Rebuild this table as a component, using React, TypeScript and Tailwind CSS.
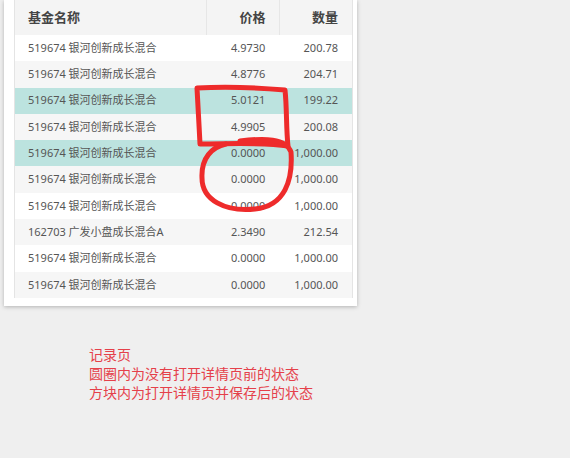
import React from "react";

const rows: { name: string; price: string; qty: string; hl?: boolean }[] = [
  { name: "519674 银河创新成长混合", price: "4.9730", qty: "200.78" },
  { name: "519674 银河创新成长混合", price: "4.8776", qty: "204.71" },
  { name: "519674 银河创新成长混合", price: "5.0121", qty: "199.22", hl: true },
  { name: "519674 银河创新成长混合", price: "4.9905", qty: "200.08" },
  { name: "519674 银河创新成长混合", price: "0.0000", qty: "1,000.00", hl: true },
  { name: "519674 银河创新成长混合", price: "0.0000", qty: "1,000.00" },
  { name: "519674 银河创新成长混合", price: "0.0000", qty: "1,000.00" },
  { name: "162703 广发小盘成长混合A", price: "2.3490", qty: "212.54" },
  { name: "519674 银河创新成长混合", price: "0.0000", qty: "1,000.00" },
  { name: "519674 银河创新成长混合", price: "0.0000", qty: "1,000.00" },
];

export default function App() {
  return (
    <div
      className="relative w-[570px] h-[458px] bg-[#efefef] overflow-hidden"
      style={{ fontFamily: '"Noto Sans", "Noto Sans CJK SC", sans-serif' }}
    >
      <div className="ml-[4px] w-[353px] bg-white shadow-[0_1px_4px_rgba(0,0,0,0.25)] pl-[10px] pr-[4px] pb-[8px]">
        <div className="w-[339px] border-l border-r border-[#e4e4e4]">
          <div className="flex h-[35px] bg-[#f4f4f4] text-[13px] font-bold text-[#444] items-center">
            <div className="w-[192px] pl-[13px] h-full flex items-center">基金名称</div>
            <div className="w-[74px] h-full flex items-center justify-end pr-[14px] border-l border-[#e6e6e6]">价格</div>
            <div className="w-[73px] h-full flex items-center justify-end pr-[14px] border-l border-[#e6e6e6]">数量</div>
          </div>
          {rows.map((r, i) => (
            <div
              key={i}
              className={
                "flex h-[26.3px] items-center text-[11px] text-[#555] " +
                (r.hl ? "bg-[#bce3df]" : i % 2 === 1 ? "bg-[#f6f6f6]" : "bg-white")
              }
            >
              <div className="w-[192px] pl-[13px]">{r.name}</div>
              <div className="w-[74px] text-right pr-[14px]">{r.price}</div>
              <div className="w-[73px] text-right pr-[14px]">{r.qty}</div>
            </div>
          ))}
        </div>
      </div>

      <div className="mt-[39px] ml-[89px] text-[14px] leading-[19px] text-[#e5404a]">
        <div>记录页</div>
        <div>圆圈内为没有打开详情页前的状态</div>
        <div>方块内为打开详情页并保存后的状态</div>
      </div>

      <svg className="absolute left-0 top-0 pointer-events-none" width="570" height="458">
        <path
          d="M197 88 C 230 86, 262 88, 285 90 C 287 108, 286 128, 288 146 C 262 142, 230 144, 200 144 C 199 125, 198 105, 197 88 Z"
          fill="none"
          stroke="#ee2b2b"
          strokeWidth="5"
          strokeLinejoin="round"
          strokeLinecap="round"
        />
        <path
          d="M240 141 C 264 138, 286 138, 291 152 C 293 180, 285 206, 255 209 C 225 212, 202 200, 202 178 C 201 158, 212 147, 226 144"
          fill="none"
          stroke="#ee2b2b"
          strokeWidth="5"
          strokeLinecap="round"
        />
      </svg>
    </div>
  );
}
